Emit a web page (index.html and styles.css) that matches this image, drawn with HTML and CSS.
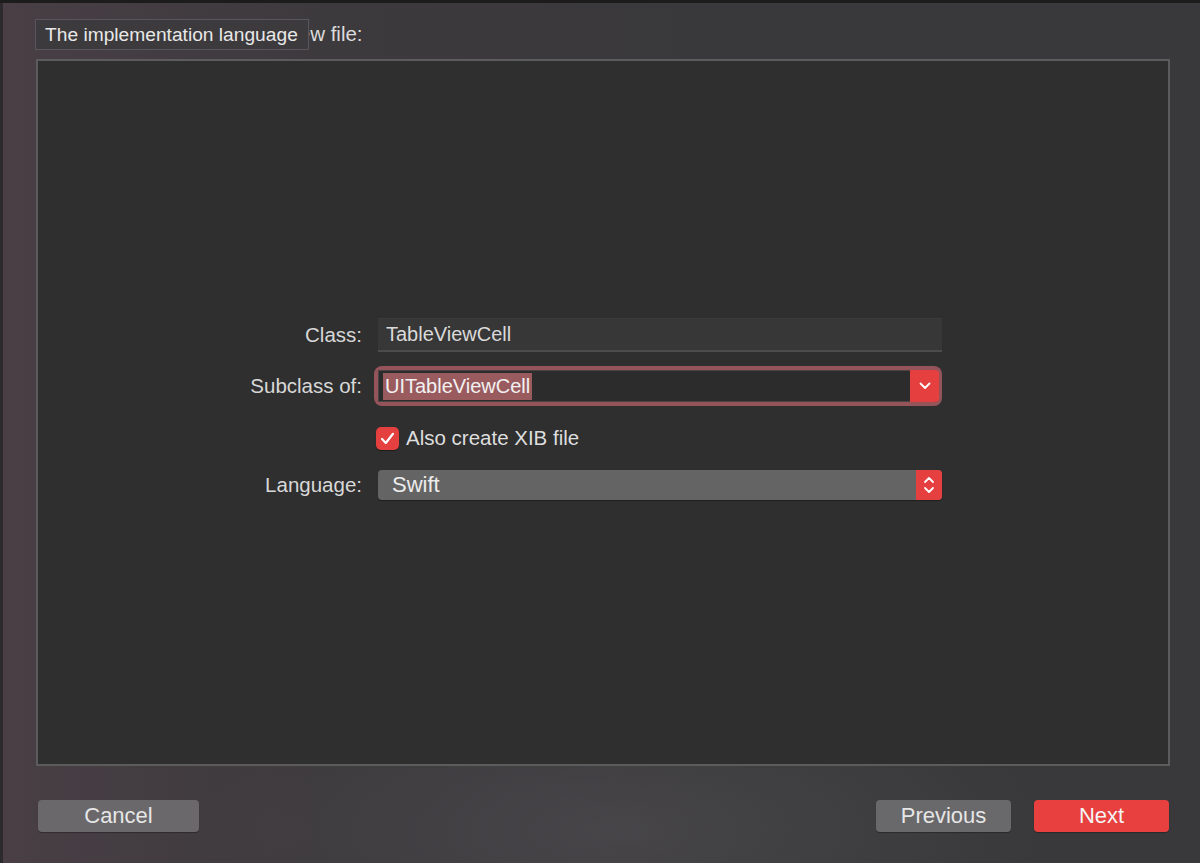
FILE: index.html
```html
<!DOCTYPE html>
<html>
<head>
<meta charset="utf-8">
<link rel="stylesheet" href="styles.css">
</head>
<body>
<div class="window">
  <div class="topline"></div>
  <div class="sheet">
    <div class="header"><span class="title">Choose options for your new file:</span></div>
    <div class="panel">
      <div class="form">
        <div class="label l-class">Class:</div>
        <div class="field text-field">TableViewCell</div>

        <div class="label l-sub">Subclass of:</div>
        <div class="field combo">
          <div class="combo-input"><span class="selected">UITableViewCell</span></div>
          <div class="combo-btn">
            <svg width="12" height="8" viewBox="0 0 12 8"><path d="M1.5 1.5 L6 6 L10.5 1.5" fill="none" stroke="#fff" stroke-width="1.8" stroke-linecap="round" stroke-linejoin="round"/></svg>
          </div>
        </div>

        <div class="label l-check"></div>
        <div class="check-row">
          <span class="checkbox">
            <svg width="15" height="13" viewBox="0 0 15 13"><path d="M2 7 L5.8 11 L13 1.8" fill="none" stroke="#fff" stroke-width="2.2" stroke-linecap="round" stroke-linejoin="round"/></svg>
          </span>
          <span class="check-label">Also create XIB file</span>
        </div>

        <div class="label l-lang">Language:</div>
        <div class="field popup">
          <span class="popup-text">Swift</span>
          <div class="stepper">
            <svg width="12" height="22" viewBox="0 0 12 22"><path d="M2 8 L6 4 L10 8" fill="none" stroke="#fff" stroke-width="1.8" stroke-linecap="round" stroke-linejoin="round"/><path d="M2 14 L6 18 L10 14" fill="none" stroke="#fff" stroke-width="1.8" stroke-linecap="round" stroke-linejoin="round"/></svg>
          </div>
        </div>
      </div>
    </div>
    <div class="footer">
      <button class="btn btn-cancel">Cancel</button>
      <div class="right-btns">
        <button class="btn btn-prev">Previous</button>
        <button class="btn btn-next">Next</button>
      </div>
    </div>
    <div class="tooltip">The implementation language</div>
  </div>
</div>
</body>
</html>
```

FILE: styles.css
```css
html, body {
  margin: 0;
  padding: 0;
}
body {
  width: 1200px;
  height: 863px;
  overflow: hidden;
  font-family: "Liberation Sans", Arial, sans-serif;
  color: #dedede;
  background:
    radial-gradient(ellipse 420px 160px at 620px 830px, rgba(90, 88, 92, 0.4), rgba(90, 88, 92, 0) 100%),
    linear-gradient(to right, #493f45 0px, #443d42 120px, #3d3a3d 320px, #39383a 700px, #39393b 1200px);
}
.window {
  display: flex;
  flex-direction: column;
  height: 863px;
}
.topline {
  height: 3px;
  background: #1d1c1d;
  flex: none;
}
.sheet {
  position: relative;
  flex: 1;
  display: flex;
  flex-direction: column;
  border-left: 3px solid #2c2a2c;
  box-sizing: border-box;
}
.header {
  height: 56px;
  box-sizing: border-box;
  padding: 19px 0 0 61px;
  font-size: 20.5px;
  color: #dcdcdc;
  white-space: nowrap;
}
.panel {
  margin-left: 33px;
  width: 1134px;
  height: 707px;
  box-sizing: border-box;
  border: 2px solid #5c5c5c;
  background: #2f2f2f;
}
.form {
  display: grid;
  grid-template-columns: 324px 564px;
  column-gap: 16px;
  align-items: center;
  padding-top: 257px;
}
.label {
  text-align: right;
  font-size: 20.5px;
  color: #d8d8d8;
}
.text-field {
  height: 34px;
  box-sizing: border-box;
  background: #373737;
  border-top: 1px solid #3b3b3b;
  border-bottom: 2px solid #4c4c4c;
  padding-left: 8px;
  font-size: 20px;
  line-height: 31px;
  color: #dadada;
}
.l-sub, .combo {
  margin-top: 18px;
}
.combo {
  height: 32px;
  width: 560px;
  display: flex;
  border-radius: 4px;
  box-shadow: 0 0 0 4px #94545a;
  background: #2c2c2c;
}
.combo-input {
  flex: 1;
  border: 1px solid #4a4444;
  border-right: none;
  padding: 2px 0 0 4px;
  box-sizing: border-box;
}
.selected {
  display: inline-block;
  background: #9a5b5f;
  color: #f2f2f2;
  font-size: 20px;
  line-height: 27px;
  padding: 0 2px;
}
.combo-btn {
  width: 29px;
  background: #e5403f;
  border-radius: 0 4px 4px 0;
  display: flex;
  align-items: center;
  justify-content: center;
  margin-right: -1px;
}
.l-check, .check-row {
  margin-top: 24px;
}
.check-row {
  display: flex;
  align-items: center;
  gap: 7px;
  margin-left: -2px;
  height: 24px;
}
.checkbox {
  width: 23px;
  height: 23px;
  border-radius: 5px;
  background: #e4403f;
  display: flex;
  align-items: center;
  justify-content: center;
  box-shadow: 0 1px 1px rgba(0,0,0,0.4);
}
.check-label {
  font-size: 20.5px;
  color: #dedede;
}
.l-lang, .popup {
  margin-top: 20px;
}
.popup {
  height: 30px;
  display: flex;
  align-items: center;
  background: #646464;
  border-radius: 4px;
  box-shadow: 0 1px 1px rgba(0,0,0,0.35);
}
.popup-text {
  flex: 1;
  padding-left: 14px;
  font-size: 22px;
  color: #ececec;
}
.stepper {
  width: 26px;
  height: 30px;
  background: #e5403f;
  border-radius: 0 4px 4px 0;
  display: flex;
  align-items: center;
  justify-content: center;
}
.footer {
  display: flex;
  justify-content: space-between;
  padding: 34px 0 0 35px;
  width: 1166px;
  box-sizing: border-box;
}
.right-btns {
  display: flex;
  gap: 23px;
}
.btn {
  height: 32px;
  border: none;
  border-radius: 4px;
  font-family: "Liberation Sans", Arial, sans-serif;
  font-size: 22px;
  color: #e6e6e6;
  padding: 0;
  box-shadow: 0 1px 1px rgba(0,0,0,0.3);
}
.btn-cancel {
  width: 161px;
  background: #6a686b;
}
.btn-prev {
  width: 135px;
  background: #69686b;
}
.btn-next {
  width: 135px;
  background: #e8403f;
  color: #f4f4f4;
}
.tooltip {
  position: absolute;
  left: 32px;
  top: 16px;
  height: 31px;
  box-sizing: border-box;
  padding: 0 10px 0 9px;
  background: #3c3a3c;
  border: 1px solid #58565a;
  font-size: 19.2px;
  line-height: 29px;
  color: #e8e8e8;
  white-space: nowrap;
}
```
